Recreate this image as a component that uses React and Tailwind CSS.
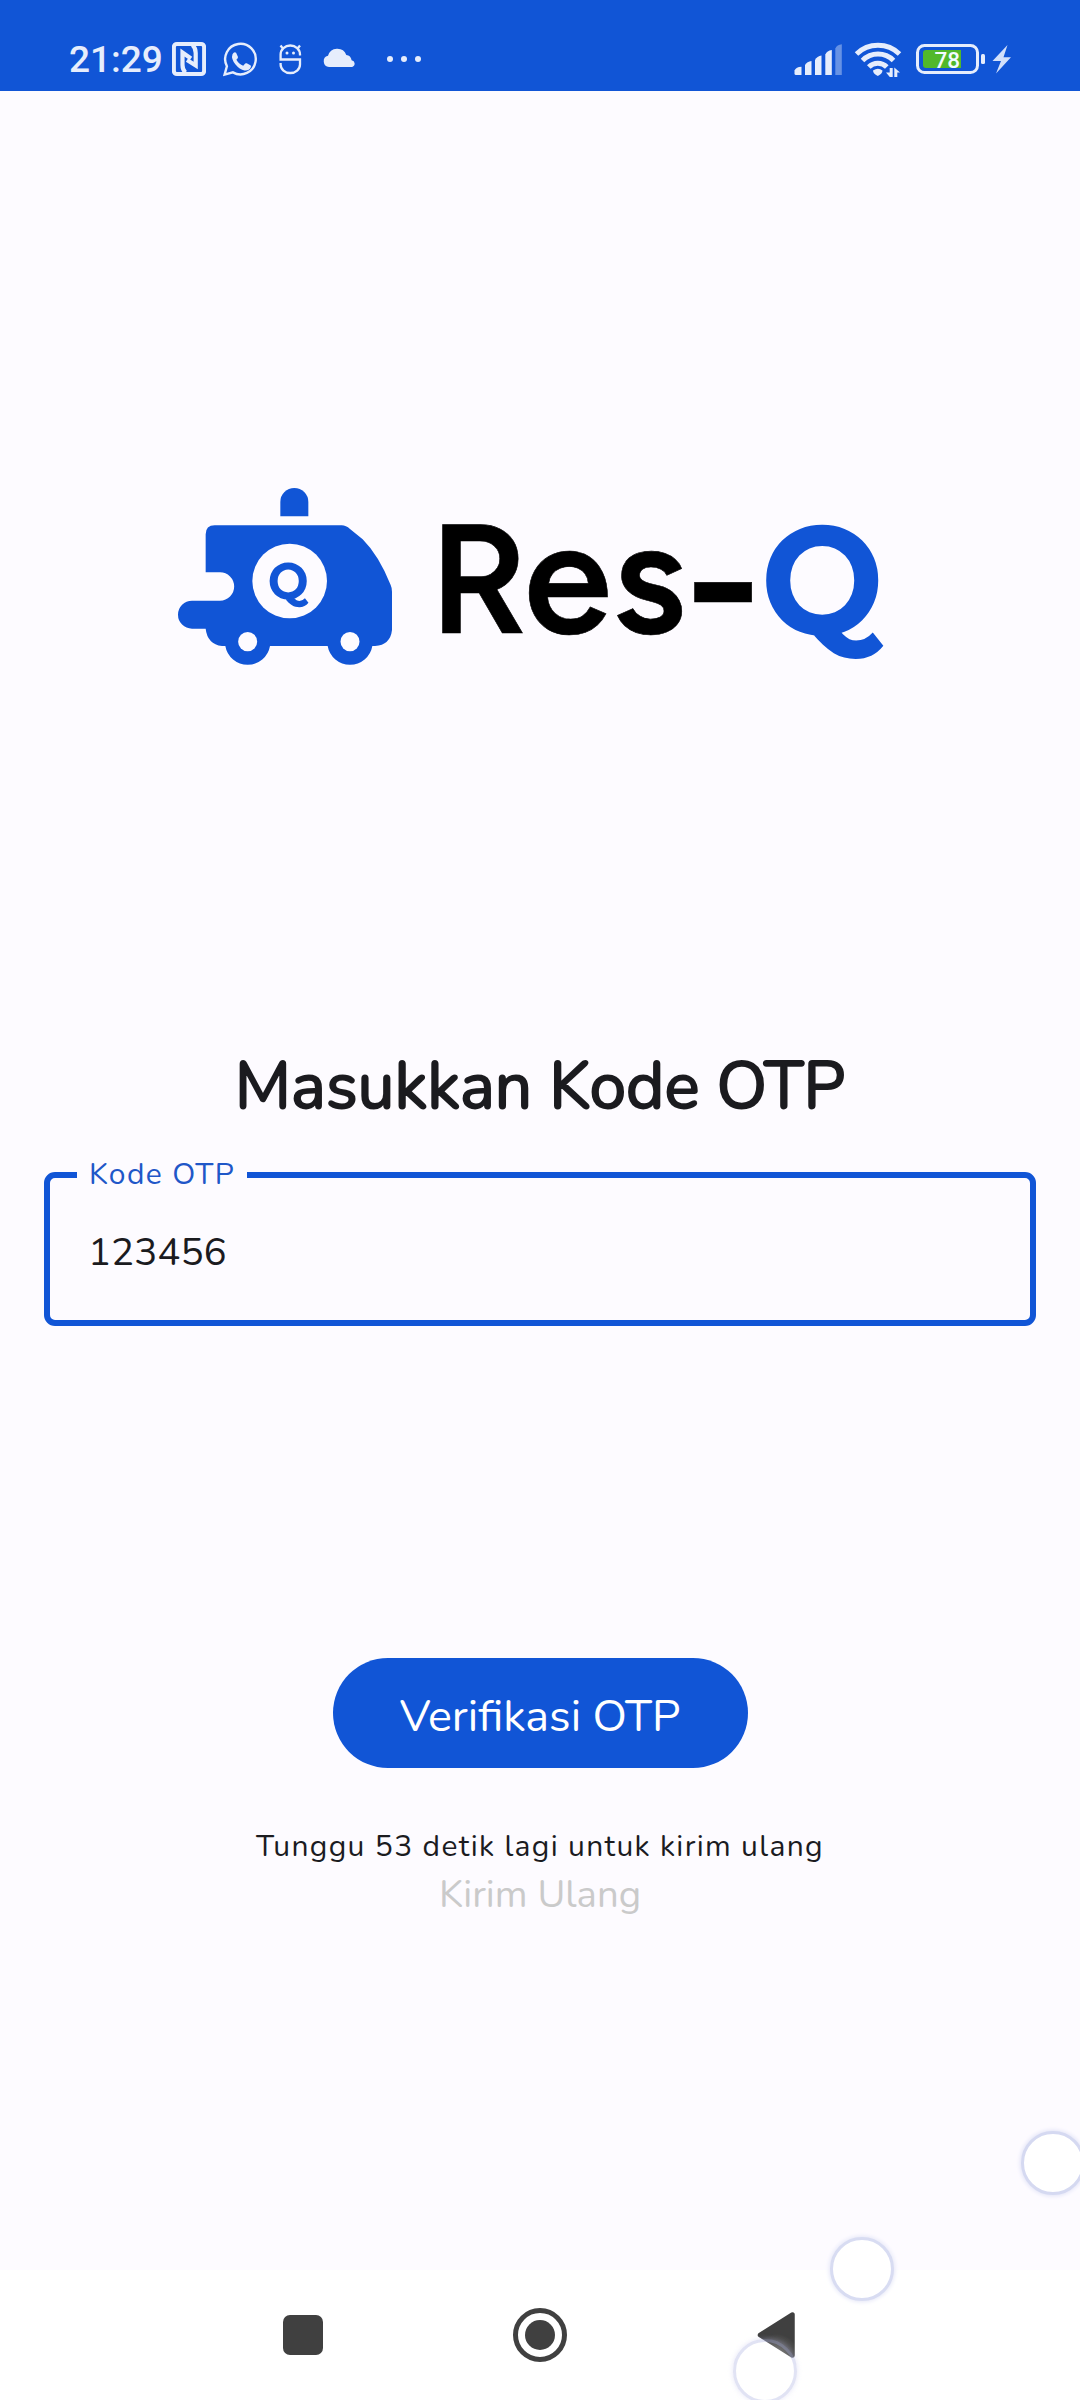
import React from "react";

function Glyph({ x, w, children, className }) {
  return (
    <svg width={w} height="40" viewBox={`${x} 40 ${w} 40`} className={className} fill="none">
      {children}
    </svg>
  );
}

function StatusBar() {
  return (
    <header className="flex h-[91px] items-start bg-[#1155d6] pl-[69px] pt-[40px] text-[#e6edfc]">
      <span className="w-[103px] whitespace-nowrap font-['Roboto',sans-serif] text-[37px] font-medium leading-[40px]">21:29</span>
      <Glyph x={172} w={34}>
        <rect x="173.9" y="43.9" width="30.2" height="30.2" rx="3" stroke="#e6edfc" strokeWidth="4" />
        <path d="M185.500 72.5Q182.500 70 182.500 65V52.500L191 58.5M192.500 45Q195.700 48 195.700 53V65.500L187 60" stroke="#e6edfc" strokeWidth="4.200" />
      </Glyph>
      <Glyph x={223} w={34} className="ml-[17px]">
        <path d="M224.600 74.600l2.300-8.400a15.300 15.300 0 1 1 6 6.200z" stroke="#e6edfc" strokeWidth="2.400" />
        <path d="M232.500 54.2q1.800-3 3.600-1.400l1.900 4.200q.2 1-1.600 2.800 2.600 4.500 6.800 6l2-2.300q.7-.6 1.500-.2l3.700 1.900q1 .5.4 2-1.600 3.600-6.200 3.200-5.100-1-9.300-6.200-4.400-5.600-2.800-10z" fill="#e6edfc" />
      </Glyph>
      <Glyph x={278} w={24} className="ml-[21px]">
        <path d="M300 55.500V54.500A9.700 9 0 0 0 280.600 54.500V59.500H300V64.500A9.700 8.500 0 0 1 280.600 64.500V63M282.500 48L280.500 45.500M298 48L300 45.500" stroke="#e6edfc" strokeWidth="2.300" />
        <circle cx="287" cy="53" r="1.500" fill="#e6edfc" />
        <circle cx="293.500" cy="53" r="1.500" fill="#e6edfc" />
      </Glyph>
      <Glyph x={323} w={34} className="ml-[21px]">
        <path d="M329 67a5.700 5.700 0 0 1-1-11.200a9.600 9.600 0 0 1 18.300-.8a6.200 6.200 0 0 1 5.300 5.200a3.500 3.500 0 0 1 .6 6.800z" fill="#e6edfc" />
      </Glyph>
      <Glyph x={386} w={36} className="ml-[29px]">
        <circle cx="390" cy="59" r="3" fill="#e6edfc" />
        <circle cx="404" cy="59" r="3" fill="#e6edfc" />
        <circle cx="418" cy="59" r="3" fill="#e6edfc" />
      </Glyph>
      <Glyph x={794} w={48} className="ml-[372px]">
        <g fill="#e6edfc">
          <path d="M794.500 70.500Q796 67 801.500 66.800V75H796Q794.500 75 794.500 73.500z" />
          <path d="M805 65Q807 61.500 811.500 61V75H805z" />
          <path d="M815 60Q817 56 821.500 55.500V75H815z" />
          <path d="M825.300 54.500Q827 50.500 831.800 50V75H825.300z" />
          <path d="M835.300 48.500Q837 44.500 841.800 44.200V75H835.300z" opacity=".4" />
        </g>
      </Glyph>
      <Glyph x={854} w={48} className="ml-[12px]">
        <path d="M856.500 54a31 31 0 0 1 43 0M862.500 60.500a22 22 0 0 1 31 0M868.800 67a12.500 12.500 0 0 1 18 0" stroke="#e6edfc" strokeWidth="5" />
        <path d="M873 70.500q5-3.500 9.500 0q0 3-4.700 5.500q-4.800-2.500-4.800-5.500z" fill="#e6edfc" />
        <path d="M886 72.500h6.700v4.500h-2.900zM889.700 68h3v8h-3zM894.300 67.500l5.700 5h-2.700v4.500h-3z" fill="#e6edfc" />
      </Glyph>
      <Glyph x={915} w={72} className="ml-[13px]">
        <rect x="917.500" y="45.500" width="60" height="27" rx="7" stroke="#e6edfc" strokeWidth="3" />
        <path d="M961 50h-35q-3 0-3 3v12q0 3 3 3h35z" fill="#51b82b" />
        <rect x="981" y="54" width="4" height="10" rx="1.500" fill="#e6edfc" />
        <text x="934.500" y="67.500" fontFamily="Roboto, sans-serif" fontSize="22.500" fontWeight="500" fill="#f2fbff">78</text>
      </Glyph>
      <Glyph x={991} w={22} className="ml-[4px]">
        <path d="M1007.500 45L992.500 61h8.500l-5 12.500L1011 57.300h-7.500z" fill="#d3e0fa" />
      </Glyph>
    </header>
  );
}

function Van() {
  return (
    <svg width="260" height="210" viewBox="0 0 780 630">
      <g fill="#1155d6">
        <path d="M361 139V96A42 42 0 0 1 445 96V139Z" />
        <path d="M137 307V193Q137 166 164 166H545Q558 166 570 177L608 208Q656 256 692 345Q696 354 696 365V480Q691 525 645 528H637A68 68 0 0 1 503 528H330A68 68 0 0 1 196 528H186Q142 522 137 476H96A42 42 0 0 1 96 392H180A42.500 42.500 0 0 0 180 307Z" />
      </g>
      <circle cx="389" cy="333" r="112" fill="#fdfbff" />
      <ellipse cx="263" cy="515" rx="28.500" ry="29" fill="#fdfbff" />
      <ellipse cx="570" cy="515" rx="28.500" ry="29" fill="#fdfbff" />
      <text transform="translate(323.500 388) scale(.95 1)" fontFamily="Montserrat, Lato, sans-serif" fontWeight="700" fontSize="153" fill="#1155d6">Q</text>
    </svg>
  );
}

function Wordmark() {
  return (
    <svg width="480" height="210" viewBox="420 470 480 210" fontFamily="Figtree, Lato, sans-serif" fontWeight="600">
      <text y="632.500" stroke="#000" strokeWidth=".6">
        <tspan x="429.700" fontSize="154">R</tspan>
        <tspan x="523.700" fontSize="159">e</tspan>
        <tspan x="612" fontSize="159">s</tspan>
        <tspan x="685" y="634.700" fontFamily="Outfit, Lato, sans-serif" fontSize="165">-</tspan>
      </text>
      <text transform="translate(760.500 633.500) scale(.95 1)" fontFamily="Montserrat, Lato, sans-serif" fontSize="154" fontWeight="700" fill="#1155d6">Q</text>
    </svg>
  );
}

export default function App() {
  return (
    <div className="relative flex h-[2400px] w-[1080px] flex-col overflow-hidden bg-[#fdfbff]">
      <StatusBar />
      <main className="flex flex-1 flex-col items-center font-['Nunito','Lato',sans-serif]">
        <div className="mt-[379px] flex w-full pl-[160px]">
          <Van />
          <Wordmark />
        </div>
        <h1 className="mt-[366px] text-[65.8px] font-normal leading-[80px] text-[#1b1b1f] [-webkit-text-stroke:1.9px_#1b1b1f]">Masukkan Kode OTP</h1>
        <div className="relative mt-[46px] flex h-[154px] w-[992px] items-center rounded-[11px] border-[6px] border-[#1155d6] pl-[38px] pt-[7px]">
          <span className="absolute left-[27px] top-[-21px] h-[36px] w-[170px] bg-[#fdfbff] pl-[12px] text-[30px] leading-[36px] tracking-[1.4px] text-[#1f57c8]">Kode OTP</span>
          <span className="text-[38.5px] leading-[48px] text-[#1b1b1f]">123456</span>
        </div>
        <button className="mt-[332px] flex h-[110px] w-[415px] items-center justify-center rounded-full bg-[#1155d6] pt-[8px] text-[44.8px] leading-[50px] text-white">Verifikasi OTP</button>
        <p className="mt-[59px] text-[30px] leading-[40px] tracking-[1.33px] text-[#1b1b1f]">Tunggu 53 detik lagi untuk kirim ulang</p>
        <p className="mt-[4px] text-[38.3px] leading-[48px] text-[#cacaca]">Kirim Ulang</p>
      </main>
      <nav className="flex h-[130px] items-center bg-white pl-[283px]">
        <span className="h-10 w-10 rounded-[7px] bg-[#404040]" />
        <span className="ml-[190px] flex h-[54px] w-[54px] items-center justify-center rounded-full border-[5px] border-[#404040]">
          <span className="h-[30px] w-[30px] rounded-full bg-[#404040]" />
        </span>
        <svg width="40" height="50" viewBox="756 2310 40 50" className="ml-[189px]">
          <defs>
            <radialGradient id="tri" gradientUnits="userSpaceOnUse" cx="776" cy="2358" r="24">
              <stop offset=".1" stopColor="#858585" />
              <stop offset="1" stopColor="#404040" />
            </radialGradient>
          </defs>
          <path d="M760 2335L792.500 2314.500V2355.500Z" fill="url(#tri)" stroke="url(#tri)" strokeWidth="4.500" strokeLinejoin="round" />
        </svg>
      </nav>
      <span className="absolute left-[1021px] top-[2131px] h-[64px] w-[64px] rounded-full border-[3px] border-[#d5d9f1] bg-white shadow-[0_0_4px_1px_#e0e2f6]" />
      <span className="absolute left-[830px] top-[2237px] h-[64px] w-[64px] rounded-full border-[3px] border-[#d8dcf2] bg-white shadow-[0_0_4px_1px_#e4e6f7]" />
      <span className="absolute left-[733px] top-[2339px] h-[64px] w-[64px] rounded-full border-[3px] border-[#a9b0e0]/35 shadow-[0_0_4px_1px_rgba(180,180,230,0.25)]" />
    </div>
  );
}
